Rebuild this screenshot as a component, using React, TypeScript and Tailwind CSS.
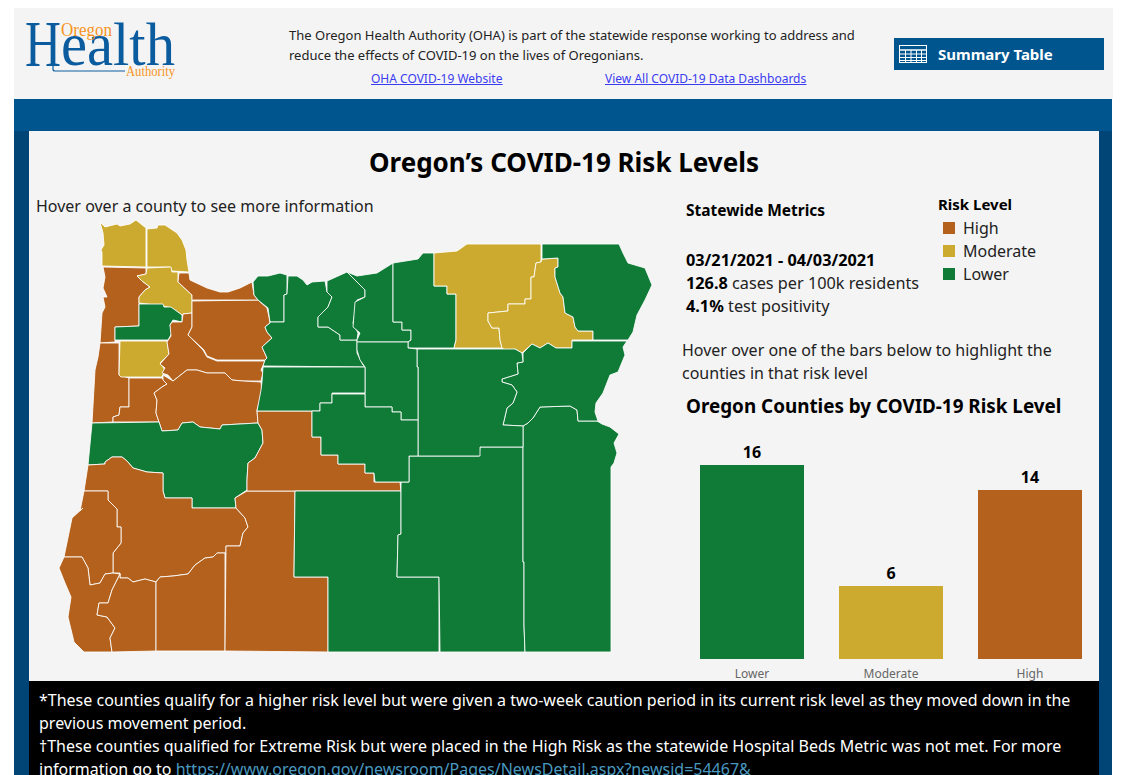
import React from "react";

const GREEN = "#107a37";
const GOLD = "#ccaa2f";
const RUST = "#b3611c";

type County = { name: string; fill: string; points: string };

const counties: County[] = [
  { name: "Clatsop", fill: GOLD, points: "100,222 105,227 117,224 120,226 130,224 136,220 146,228 146,267 102,266 102,252 101,250 104,245 103,233" },
  { name: "Columbia", fill: GOLD, points: "147,229 157,228 158,225 165,225 177,233 182,240 186,250 187,260 189,272 172,271 170,267 147,267" },
  { name: "Tillamook", fill: RUST, points: "103,267 146,268 146,274 137,276 142,281 150,287 145,290 139,297 139,326 115,327 115,342 100,343 102,313 105,307 103,297 107,297 103,288 105,277" },
  { name: "Washington", fill: GOLD, points: "147,268 171,267 172,272 178,272 178,282 192,295 192,313 183,314 182,315 172,308 163,306 139,303 139,297 145,290 150,287 142,281 137,276 146,274" },
  { name: "Yamhill", fill: GREEN, points: "139,304 163,304 164,307 171,307 182,315 182,322 173,320 170,325 172,333 168,340 115,340 115,327 139,326" },
  { name: "Lincoln", fill: RUST, points: "100,343 119,343 119,375 129,378 129,407 120,407 119,415 113,417 113,422 92,423 95,370 98,357" },
  { name: "Polk", fill: GOLD, points: "120,341 167,341 169,354 160,363 165,370 162,377 121,377 119,375" },
  { name: "Benton", fill: RUST, points: "129,378 162,378 167,384 162,387 154,393 157,400 156,413 159,422 113,422 113,417 119,415 120,407 129,407" },
  { name: "Marion", fill: RUST, points: "172,322 182,322 183,314 192,313 192,327 188,335 203,350 207,357 217,361 265,361 261,370 263,373 261,381 243,381 232,380 225,373 207,373 197,370 187,370 173,381 168,375 162,373 165,368 160,364 169,354 167,342 171,336 170,325" },
  { name: "Clackamas", fill: RUST, points: "192,301 258,300 267,308 269,317 270,323 265,327 267,332 272,338 262,347 267,358 265,360 217,360 207,356 204,350 188,335 192,327 192,313" },
  { name: "Multnomah", fill: RUST, points: "179,273 189,273 190,280 207,288 220,292 228,292 240,288 252,282 254,295 258,300 192,300 192,295 178,282" },
  { name: "Linn", fill: RUST, points: "163,375 173,381 187,370 197,370 207,373 225,373 232,380 243,381 261,382 262,392 257,410 258,423 222,425 220,429 200,427 193,422 182,423 178,430 162,431 159,422 156,413 157,400 154,393 162,387 167,384 163,380" },
  { name: "Lane", fill: GREEN, points: "92,423 159,422 162,431 178,430 182,423 193,422 200,427 220,429 222,425 258,423 262,430 263,443 255,458 248,463 247,480 247,490 235,498 236,508 192,508 192,498 165,498 163,491 163,473 147,472 133,468 127,461 122,457 112,457 105,462 105,464 88,465" },
  { name: "Douglas", fill: RUST, points: "88,465 105,464 105,462 112,457 122,457 127,461 133,468 147,472 163,473 163,491 165,498 192,498 192,508 236,508 245,518 248,527 243,533 240,546 226,546 226,553 217,553 213,557 205,558 195,565 188,574 173,576 160,577 156,582 145,579 133,582 128,578 120,578 120,573 113,573 113,553 121,543 121,527 117,527 117,509 108,500 108,491 84,491" },
  { name: "Coos", fill: RUST, points: "84,491 108,491 108,500 117,509 117,527 121,527 121,543 113,553 113,573 105,574 100,583 90,585 88,568 82,557 64,557 72,518 83,508 80,511" },
  { name: "Curry", fill: RUST, points: "64,557 82,557 88,568 90,585 100,583 105,574 113,573 120,574 112,590 108,603 99,603 97,615 107,617 115,628 110,638 112,652 84,652 74,642 68,617 71,597 65,583 59,568" },
  { name: "Josephine", fill: RUST, points: "120,574 120,578 128,578 133,582 145,579 156,582 156,651 112,652 110,638 115,628 107,617 97,615 99,603 108,603 112,590" },
  { name: "Jackson", fill: RUST, points: "156,582 160,577 173,576 188,574 195,565 205,558 213,557 217,553 225,553 225,651 156,651" },
  { name: "Klamath", fill: RUST, points: "226,546 240,546 243,533 248,527 245,518 236,508 235,498 247,491 295,491 294,577 328,577 328,652 225,651" },
  { name: "Deschutes", fill: RUST, points: "247,490 247,480 248,463 255,458 263,443 262,430 258,423 257,411 312,411 312,437 321,437 321,455 338,455 338,464 365,464 365,473 374,473 374,482 400,482 401,491 247,491" },
  { name: "Lake", fill: GREEN, points: "295,491 401,491 401,534 398,535 397,577 439,577 439,652 328,652 328,577 294,577" },
  { name: "Harney", fill: GREEN, points: "401,482 409,482 409,456 479,456 480,447 497,447 523,447 523,562 524,562 524,625 525,652 440,652 439,577 397,577 398,535 401,534 401,491" },
  { name: "Malheur", fill: GREEN, points: "523,447 523,426 528,423 533,418 540,407 570,406 577,410 578,421 597,421 602,424 610,427 619,434 614,443 617,453 614,463 611,467 611,652 525,652 524,625 524,562 523,562" },
  { name: "Hood River", fill: GREEN, points: "253,282 258,276 268,276 280,273 287,275 287,294 284,295 284,322 270,322 268,308 258,300 254,295" },
  { name: "Wasco", fill: GREEN, points: "288,276 297,276 303,280 307,285 312,282 325,281 327,292 332,297 328,307 318,317 318,327 328,327 340,335 340,340 357,340 357,353 363,365 365,367 263,366 265,360 267,358 262,347 272,338 267,332 265,327 270,323 270,322 284,322 284,295 287,294" },
  { name: "Sherman", fill: GREEN, points: "327,281 347,272 365,290 365,297 357,300 353,323 358,333 357,340 340,340 340,335 328,327 318,327 318,317 328,307 332,297 327,292" },
  { name: "Gilliam", fill: GREEN, points: "347,272 357,276 377,273 393,263 393,322 402,322 402,330 411,330 411,340 408,342 357,342 357,340 360,333 353,327 355,302 365,297 365,290" },
  { name: "Morrow", fill: GREEN, points: "393,263 418,259 423,253 434,253 434,286 447,286 447,294 456,294 456,340 454,348 408,348 408,342 411,340 411,330 402,330 402,322 393,322" },
  { name: "Umatilla", fill: GOLD, points: "434,253 457,251 467,244 541,244 541,262 536,263 534,277 531,277 531,299 525,299 525,304 508,304 508,311 488,313 488,321 492,328 499,328 500,340 502,348 454,348 456,340 456,294 447,294 447,286 434,286" },
  { name: "Union", fill: GOLD, points: "542,259 558,258 558,267 555,268 555,277 560,293 563,297 565,313 573,317 575,327 578,331 593,331 593,340 572,340 572,348 556,348 548,343 540,348 532,344 522,353 515,349 508,352 502,348 500,340 499,328 492,328 488,321 488,313 508,311 508,304 525,304 525,299 531,299 531,277 534,277 536,263 541,262" },
  { name: "Wallowa", fill: GREEN, points: "542,244 619,244 623,253 628,263 645,268 652,285 645,300 637,315 633,332 628,340 593,340 593,331 578,331 575,327 573,317 565,313 563,297 560,293 555,277 555,268 558,267 558,258 542,259" },
  { name: "Baker", fill: GREEN, points: "572,341 627,341 623,347 625,355 618,372 610,375 603,393 596,403 595,412 598,421 578,421 577,410 570,406 540,407 533,418 528,423 523,426 503,425 507,408 513,403 517,392 512,385 502,382 502,379 518,374 517,363 523,362 523,353 532,344 540,348 548,343 556,348 572,348" },
  { name: "Grant", fill: GREEN, points: "417,349 507,349 515,349 522,353 523,362 517,363 518,374 502,379 502,382 512,385 517,392 513,403 507,408 503,425 523,426 523,447 497,447 480,447 480,456 418,456 418,367 417,367" },
  { name: "Wheeler", fill: GREEN, points: "357,342 408,342 408,348 417,349 417,367 418,367 418,420 401,420 401,412 392,412 392,407 365,407 365,367 360,360 357,350" },
  { name: "Jefferson", fill: GREEN, points: "263,367 365,367 365,393 332,393 332,403 320,403 320,411 257,411 261,390 262,382" },
  { name: "Crook", fill: GREEN, points: "332,394 365,394 365,407 392,407 392,412 401,412 401,420 418,420 418,456 409,456 409,482 375,482 374,473 365,473 365,464 338,464 338,455 321,455 321,437 312,437 312,411 320,411 320,403 332,403" },
];

const bars = [
  { label: "Lower", value: 16, height: 194, color: "bg-[#107a37]" },
  { label: "Moderate", value: 6, height: 73, color: "bg-[#ccaa2f]" },
  { label: "High", value: 14, height: 169, color: "bg-[#b3611c]" },
];

const legend = [
  { label: "High", color: "bg-[#b3611c]" },
  { label: "Moderate", color: "bg-[#ccaa2f]" },
  { label: "Lower", color: "bg-[#107a37]" },
];

const Logo = () => (
  <svg width="160" height="64" viewBox="26 18 160 64" className="shrink-0 overflow-visible">
    <text x="25" y="66" fontFamily="Liberation Serif" fontSize="66" fill="#0b5c9e" textLength="36" lengthAdjust="spacingAndGlyphs">
      H
    </text>
    <text x="61" y="65" fontFamily="Liberation Serif" fontSize="62" fill="#0b5c9e" textLength="114" lengthAdjust="spacingAndGlyphs">
      ealth
    </text>
    <path d="M53 64v5q0 2 2 2h70" fill="none" stroke="#0b5c9e" strokeWidth="1.200" />
    <text x="61" y="36" fontFamily="Liberation Serif" fontSize="18" fill="#f7941d" textLength="51" lengthAdjust="spacingAndGlyphs">
      Oregon
    </text>
    <text x="126" y="76" fontFamily="Liberation Serif" fontSize="14" fill="#f7941d" textLength="49" lengthAdjust="spacingAndGlyphs">
      Authority
    </text>
  </svg>
);

const TableIcon = () => (
  <svg width="28" height="18" viewBox="0 0 28 18" className="shrink-0">
    <rect x="0.500" y="0.500" width="27" height="17" fill="#00558f" stroke="#fff" />
    <path d="M1 5h26" stroke="#fff" strokeWidth="1.500" />
    <path d="M1 9h26M1 12.500h26M1 15.500h26M6.500 5v12M12 5v12M17.500 5v12M22.500 5v12" stroke="#fff" strokeWidth="1" />
  </svg>
);

const OregonMap = () => (
  <svg width="640" height="445" viewBox="29 215 640 445" className="block">
    {counties.map((c) => (
      <polygon key={c.name} points={c.points} fill={c.fill} stroke="#fff" strokeWidth="1" strokeLinejoin="round" strokeOpacity="0.85" />
    ))}
  </svg>
);

export default function App() {
  return (
    <div className="h-[775px] w-[1131px] overflow-hidden bg-white pt-2 pl-[14px] font-['Noto_Sans',sans-serif] text-[#222]">
      <header className="flex h-[91px] w-[1099px] bg-[#f4f4f4]">
        <div className="w-[275px] pt-[10px] pl-3">
          <Logo />
        </div>
        <div className="w-[605px] pt-[17px] text-[13px] leading-[20px]">
          <p>The Oregon Health Authority (OHA) is part of the statewide response working to address and</p>
          <p>reduce the effects of COVID-19 on the lives of Oregonians.</p>
          <div className="mt-[4px] flex pl-[82px] text-[12px] text-[#3b3bf0] underline">
            <a href="#" className="w-[234px]">OHA COVID-19 Website</a>
            <a href="#">View All COVID-19 Data Dashboards</a>
          </div>
        </div>
        <div className="pt-[30px]">
          <button className="flex h-8 w-[210px] items-center bg-[#00558f] pl-[5px] text-[15px] font-bold text-white">
            <TableIcon />
            <span className="ml-[11px]">Summary Table</span>
          </button>
        </div>
      </header>
      <div className="h-8 w-[1098px] bg-[#00558f]" />
      <div className="w-[1098px] border-r-[13px] border-l-[15px] border-[#004575]">
        <main className="h-[550px] bg-[#f4f4f4]">
          <h1 className="pt-[14px] text-center text-[26px] leading-[34px] font-bold text-black">Oregon’s COVID-19 Risk Levels</h1>
          <div className="flex">
            <div className="w-[640px]">
              <p className="mt-[18px] pl-[7px] text-[16px] leading-[18px]">Hover over a county to see more information</p>
              <OregonMap />
            </div>
            <div className="flex-1 pl-[13px]">
              <div className="flex">
                <div className="w-[256px] pl-[4px] pt-[20px] text-[16.250px] leading-[23px]">
                  <p className="text-[15.500px] font-bold text-black">Statewide Metrics</p>
                  <p className="mt-[27px] font-bold text-black">03/21/2021 - 04/03/2021</p>
                  <p><b className="text-black">126.8</b> cases per 100k residents</p>
                  <p><b className="text-black">4.1%</b> test positivity</p>
                </div>
                <div className="pt-[14px]">
                  <p className="text-[15px] leading-[23px] font-bold text-black">Risk Level</p>
                  {legend.map((l) => (
                    <div key={l.label} className="flex h-[23px] items-center pl-[5px] text-[16px]">
                      <span className={`mr-[8px] h-3 w-3 ${l.color}`} />
                      {l.label}
                    </div>
                  ))}
                </div>
              </div>
              <p className="mt-[21px] text-[16px] leading-[23px]">
                Hover over one of the bars below to highlight the
                <br />
                counties in that risk level
              </p>
              <h2 className="mt-[7px] pl-[4px] text-[18.850px] leading-[28px] font-bold text-black">Oregon Counties by COVID-19 Risk Level</h2>
              <div className="mt-[9px] ml-[18px] flex h-[252px] items-end gap-[35px]">
                {bars.map((b) => (
                  <div key={b.label} className="w-[104px] text-center">
                    <p className="mb-[2px] text-[16px] leading-[22px] font-bold text-black">{b.value}</p>
                    <div className={b.color} style={{ height: b.height }} />
                    <p className="h-[22px] pt-[7px] text-[12px] leading-[15px] text-[#666]">{b.label}</p>
                  </div>
                ))}
              </div>
            </div>
          </div>
        </main>
        <footer className="h-[94px] bg-black pt-[8px] pl-[10px] text-[16px] leading-[23px] text-white">
          <p>*These counties qualify for a higher risk level but were given a two-week caution period in its current risk level as they moved down in the</p>
          <p>previous movement period.</p>
          <p>†These counties qualified for Extreme Risk but were placed in the High Risk as the statewide Hospital Beds Metric was not met. For more</p>
          <p>
            information go to <a href="#" className="text-[#4a9ac0]">https://www.oregon.gov/newsroom/Pages/NewsDetail.aspx?newsid=54467&amp;</a>
          </p>
        </footer>
      </div>
    </div>
  );
}
